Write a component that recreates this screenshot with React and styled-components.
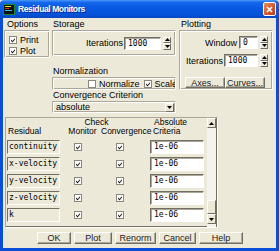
import React from 'react';
import styled, { createGlobalStyle } from 'styled-components';

const GlobalStyle = createGlobalStyle`
  html, body {
    margin: 0;
    padding: 0;
    background: #ece9d8;
    overflow: hidden;
  }
  body {
    font-family: "Liberation Sans", Arial, sans-serif;
    font-size: 9px;
    color: #000;
  }
  * { box-sizing: border-box; }
`;

const Window = styled.div`
  width: 279px;
  height: 251px;
  display: flex;
  flex-direction: column;
`;

const TitleBar = styled.div`
  height: 18px;
  flex: none;
  display: flex;
  align-items: center;
  padding: 0 3px;
  background: linear-gradient(to bottom, #4a96fa 0%, #1468ea 14%, #0858e2 45%, #0553da 80%, #0a47c4 100%);
  border-radius: 4px 4px 0 0;
`;

const Title = styled.span`
  margin-left: 3px;
  color: #fff;
  font-weight: bold;
  font-size: 8.5px;
  letter-spacing: -0.4px;
  text-shadow: 1px 1px 0 #0a2a8a;
`;

const CloseBox = styled.div`
  margin-left: auto;
  width: 13px;
  height: 14px;
  border: 1px solid #fff;
  border-radius: 2px;
  background: linear-gradient(to bottom right, #e98a62, #d35529 60%, #b83a16);
  display: flex;
  align-items: center;
  justify-content: center;
`;

const Frame = styled.div`
  flex: 1;
  background: #ece9d8;
  border: 3px solid #0a4ed8;
  border-top: none;
  padding: 1px 0 0 1px;
  display: flex;
  flex-direction: column;
`;

const TopRow = styled.div`
  display: flex;
  align-items: flex-start;
`;

const Column = styled.div`
  display: flex;
  flex-direction: column;
  width: ${p => p.w}px;
  margin-left: ${p => p.ml || 0}px;
`;

const GroupLabel = styled.div`
  height: 11px;
  line-height: 11px;
  padding-left: ${p => p.pl ?? 2}px;
  margin-top: ${p => p.mt || 0}px;
  white-space: nowrap;
`;

const GroupBox = styled.div`
  height: ${p => p.h}px;
  border: 1px solid;
  border-color: #aca899 #fff #fff #aca899;
  box-shadow: inset 1px 1px 0 #fff, inset -1px -1px 0 #aca899;
  display: flex;
  flex-direction: ${p => p.dir || 'row'};
  align-items: ${p => p.align || 'center'};
  justify-content: ${p => p.justify || 'flex-start'};
  padding: ${p => p.pad || '0'};
  overflow: hidden;
`;

const CheckRow = styled.div`
  display: flex;
  align-items: center;
  height: 11px;
  gap: 3px;
  margin-left: ${p => p.ml || 0}px;
  white-space: nowrap;
`;

const FieldRow = styled.div`
  display: flex;
  align-items: center;
  justify-content: flex-end;
  height: 13px;
  margin-top: ${p => p.mt || 0}px;
  white-space: nowrap;
`;

const FieldLabel = styled.span`
  margin-right: 1px;
`;

const Entry = styled.div`
  width: ${p => p.w}px;
  height: ${p => p.h || 13}px;
  background: #fff;
  border: 1px solid;
  border-color: #716f64 #fff #fff #716f64;
  box-shadow: inset 1px 1px 0 #aca899;
  font-family: "DejaVu Sans Mono", "Liberation Mono", monospace;
  font-size: 8px;
  line-height: 11px;
  padding-left: 3px;
  margin-left: ${p => p.ml || 0}px;
  white-space: nowrap;
`;

const Spinner = styled.div`
  display: flex;
  flex-direction: column;
  width: 8px;
  height: 13px;
  margin-left: 2px;
`;

const SpinBtn = styled.div`
  flex: 1;
  border: 1px solid;
  border-color: #fff #716f64 #716f64 #fff;
  background: #ece9d8;
  display: flex;
  align-items: center;
  justify-content: center;
`;

const SmallButton = styled.div`
  width: ${p => p.w}px;
  height: ${p => p.h || 12}px;
  border: 1px solid;
  border-color: #fff #716f64 #716f64 #fff;
  box-shadow: inset -1px -1px 0 #aca899;
  background: #ece9d8;
  display: flex;
  align-items: center;
  justify-content: center;
  color: #222;
  white-space: nowrap;
`;

const ButtonPair = styled.div`
  display: flex;
  justify-content: flex-end;
  margin-top: 10px;
  padding-right: 3px;
`;

const Combo = styled.div`
  height: 12px;
  border: 1px solid;
  border-color: #aca899 #fff #fff #aca899;
  box-shadow: inset 1px 1px 0 #fff, inset -1px -1px 0 #aca899;
  display: flex;
  align-items: center;
  padding: 0 1px 0 3px;
`;

const ComboText = styled.span`
  flex: 1;
`;

const ComboArrow = styled.div`
  width: 9px;
  height: 9px;
  border: 1px solid;
  border-color: #fff #716f64 #716f64 #fff;
  display: flex;
  align-items: center;
  justify-content: center;
`;

const Table = styled.div`
  margin: 4px 0 0 1px;
  width: 213px;
  height: 111px;
  border: 1px solid;
  border-color: #aca899 #fff #fff #aca899;
  box-shadow: inset -1px -1px 0 #716f64;
  display: flex;
`;

const TableBody = styled.div`
  flex: 1;
  padding-left: 1px;
`;

const TableGrid = styled.div`
  display: grid;
  grid-template-columns: 58px 35px 48px 58px;
  align-items: center;
`;

const Header = styled(TableGrid)`
  grid-template-rows: 9px 9px;
  line-height: 9px;
  font-size: 8.5px;
`;

const HeadCell = styled.div`
  grid-column: ${p => p.col};
  grid-row: ${p => p.row};
  text-align: ${p => p.align || 'left'};
  padding-left: ${p => p.pl || 0}px;
  padding-right: ${p => p.pr || 0}px;
  white-space: nowrap;
`;

const Rows = styled.div`
  display: flex;
  flex-direction: column;
  gap: 3px;
  margin-top: 4px;
`;

const Row = styled(TableGrid)`
  height: 14px;
`;

const NameBox = styled.div`
  width: 53px;
  height: 14px;
  border: 1px solid;
  border-color: #716f64 #fff #fff #716f64;
  font-family: "DejaVu Sans Mono", "Liberation Mono", monospace;
  font-size: 8px;
  line-height: 12px;
  padding-left: 1px;
  white-space: nowrap;
  overflow: hidden;
`;

const CellCheck = styled.div`
  margin-left: ${p => p.ml}px;
  display: flex;
`;

const Scrollbar = styled.div`
  width: 9px;
  margin-right: 1px;
  background: #f4f3ee;
  display: flex;
  flex-direction: column;
  padding-bottom: 3px;
`;

const ScrollBtn = styled.div`
  height: ${p => p.h}px;
  border: 1px solid;
  border-color: #fff #716f64 #716f64 #fff;
  background: #ece9d8;
  display: flex;
  align-items: center;
  justify-content: center;
`;

const ScrollTrack = styled.div`
  flex: 1;
`;

const BottomBar = styled.div`
  display: flex;
  justify-content: center;
  gap: 3px;
  margin-top: 4px;
`;

const Arrow = ({ down }) => (
  <svg width="5" height="3" viewBox="0 0 5 3">
    <path d={down ? 'M0 0h5L2.5 3z' : 'M0 3h5L2.5 0z'} fill="#000" />
  </svg>
);

const Check = ({ checked }) => (
  <svg width="8" height="8" viewBox="0 0 8 8">
    <rect x="0.5" y="0.5" width="7" height="7" fill="#fff" stroke="#8a887c" />
    {checked && <path d="M2 3.5l1.5 1.6L6 2.2v1.4L3.5 6.4 2 4.8z" fill="#111" />}
  </svg>
);

const AppIcon = () => (
  <svg width="12" height="11" viewBox="0 0 12 11">
    <rect x="0" y="0" width="12" height="11" fill="#1c8a2a" />
    <rect x="1" y="1" width="10" height="9" fill="#101010" />
    <rect x="2" y="2" width="6" height="1" fill="#f0e020" />
    <rect x="2" y="4" width="4" height="1" fill="#e03020" />
    <rect x="2" y="6" width="7" height="1" fill="#30c0f0" />
  </svg>
);

const residuals = ['continuity', 'x-velocity', 'y-velocity', 'z-velocity', 'k'];

export default function App() {
  return (
    <>
      <GlobalStyle />
      <Window>
        <TitleBar>
          <AppIcon />
          <Title>Residual Monitors</Title>
          <CloseBox>
            <svg width="7" height="7" viewBox="0 0 7 7">
              <path d="M1 1l5 5M6 1L1 6" stroke="#fff" strokeWidth="1.6" />
            </svg>
          </CloseBox>
        </TitleBar>
        <Frame>
          <TopRow>
            <Column w={46}>
              <GroupLabel pl={3}>Options</GroupLabel>
              <GroupBox h={28} dir="column" align="flex-start" justify="flex-start" pad="3px 0 0 4px">
                <CheckRow><Check checked />Print</CheckRow>
                <CheckRow><Check checked />Plot</CheckRow>
              </GroupBox>
            </Column>
            <Column w={124} ml={2}>
              <GroupLabel pl={1}>Storage</GroupLabel>
              <GroupBox h={26} justify="flex-end" pad="0 4px 0 0">
                <FieldLabel>Iterations</FieldLabel>
                <Entry w={37}>1000</Entry>
                <Spinner>
                  <SpinBtn><Arrow /></SpinBtn>
                  <SpinBtn><Arrow down /></SpinBtn>
                </Spinner>
              </GroupBox>
              <GroupLabel pl={1} mt={10}>Normalization</GroupLabel>
              <GroupBox h={13}>
                <CheckRow ml={35}><Check />Normalize</CheckRow>
                <CheckRow ml={4}><Check checked />Scale</CheckRow>
              </GroupBox>
              <GroupLabel pl={1}>Convergence Criterion</GroupLabel>
              <Combo>
                <ComboText>absolute</ComboText>
                <ComboArrow><Arrow down /></ComboArrow>
              </Combo>
            </Column>
            <Column w={94} ml={3}>
              <GroupLabel>Plotting</GroupLabel>
              <GroupBox h={60} dir="column" align="stretch" justify="flex-start" pad="5px 4px 0 0">
                <FieldRow>
                  <FieldLabel>Window</FieldLabel>
                  <Entry w={19} ml={1}>0</Entry>
                  <Spinner>
                    <SpinBtn><Arrow /></SpinBtn>
                    <SpinBtn><Arrow down /></SpinBtn>
                  </Spinner>
                </FieldRow>
                <FieldRow mt={5}>
                  <FieldLabel>Iterations</FieldLabel>
                  <Entry w={34}>1000</Entry>
                  <Spinner>
                    <SpinBtn><Arrow /></SpinBtn>
                    <SpinBtn><Arrow down /></SpinBtn>
                  </Spinner>
                </FieldRow>
                <ButtonPair>
                  <SmallButton w={40} h={11}>Axes...</SmallButton>
                  <SmallButton w={40} h={11}>Curves...</SmallButton>
                </ButtonPair>
              </GroupBox>
            </Column>
          </TopRow>
          <Table>
            <TableBody>
              <Header>
                <HeadCell col="2 / 4" row={1} align="center" pr={20}>Check</HeadCell>
                <HeadCell col={1} row={2} pl={1}>Residual</HeadCell>
                <HeadCell col={2} row={2} align="center">Monitor</HeadCell>
                <HeadCell col={3} row={2} pl={1}>Convergence</HeadCell>
                <HeadCell col={4} row={1} pl={6}>Absolute</HeadCell>
                <HeadCell col={4} row={2} pl={5}>Criteria</HeadCell>
              </Header>
              <Rows>
                {residuals.map(name => (
                  <Row key={name}>
                    <NameBox>{name}</NameBox>
                    <CellCheck ml={9}><Check checked /></CellCheck>
                    <CellCheck ml={16}><Check checked /></CellCheck>
                    <Entry w={54} h={14} ml={2}>1e-06</Entry>
                  </Row>
                ))}
              </Rows>
            </TableBody>
            <Scrollbar>
              <ScrollBtn h={10}><Arrow /></ScrollBtn>
              <ScrollTrack />
              <ScrollBtn h={14} />
              <ScrollBtn h={10}><Arrow down /></ScrollBtn>
            </Scrollbar>
          </Table>
          <BottomBar>
            <SmallButton w={34}>OK</SmallButton>
            <SmallButton w={38}>Plot</SmallButton>
            <SmallButton w={41}>Renorm</SmallButton>
            <SmallButton w={37}>Cancel</SmallButton>
            <SmallButton w={44}>Help</SmallButton>
          </BottomBar>
        </Frame>
      </Window>
    </>
  );
}
